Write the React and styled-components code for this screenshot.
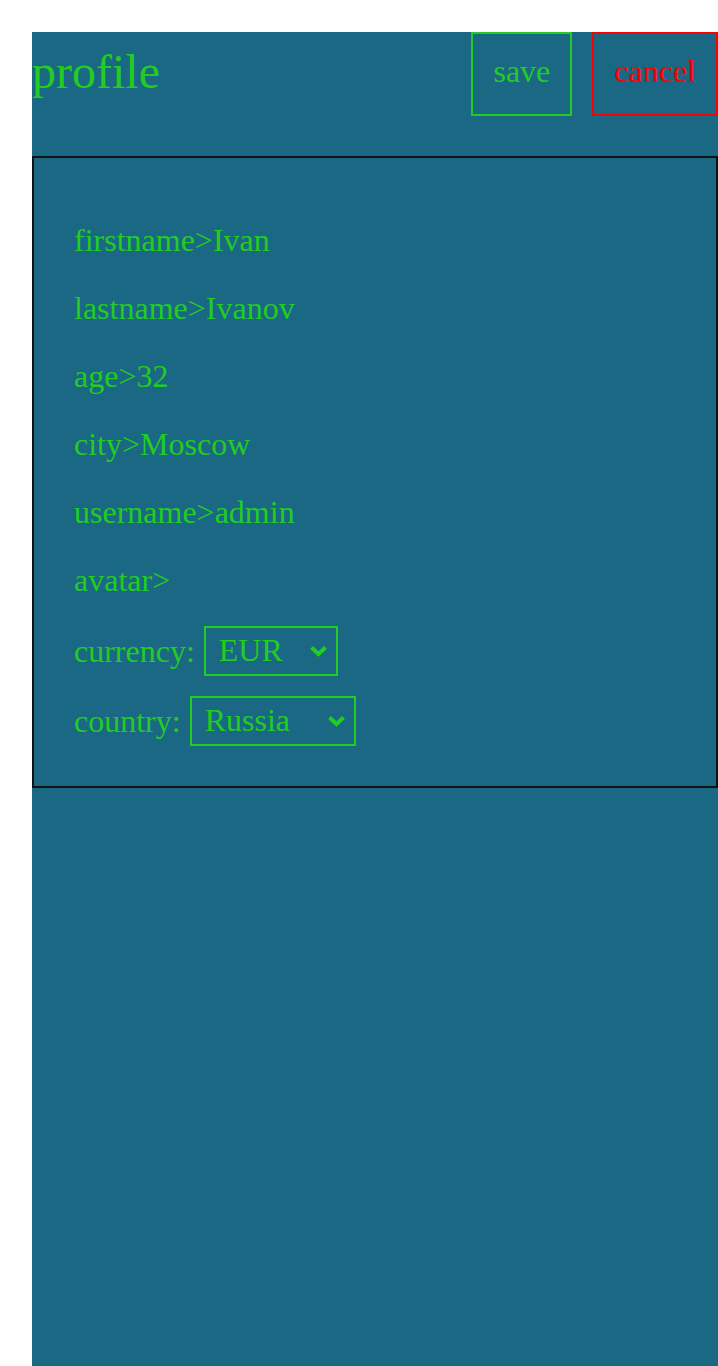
import React, { useState } from "react";
import styled, { createGlobalStyle } from "styled-components";

const GlobalStyle = createGlobalStyle`
  body {
    margin: 0;
    font-family: "Liberation Serif", "Times New Roman", serif;
  }
`;

const Colors = {
  Bg: "#1a6883",
  Primary: "#22cc22",
  Danger: "#ff0000",
  Border: "#121212",
};

const Page = styled.div`
  padding: 32px 0 0 32px;
`;

const Content = styled.main`
  min-height: calc(100vh - 32px);
  background: ${Colors.Bg};
  color: ${Colors.Primary};
`;

const Header = styled.header`
  display: flex;
  align-items: center;
  justify-content: space-between;
  margin-bottom: 40px;
`;

const Title = styled.h1`
  margin: 0 0 5px;
  font-size: 48px;
  font-weight: 400;
`;

const Actions = styled.div`
  display: flex;
  gap: 20px;
`;

const Button = styled.button`
  font-family: inherit;
  font-size: 32px;
  line-height: 40px;
  padding: 17px 20px 23px;
  background: transparent;
  border: 2px solid ${(p) => (p.$danger ? Colors.Danger : Colors.Primary)};
  color: ${(p) => (p.$danger ? Colors.Danger : Colors.Primary)};
  cursor: pointer;
`;

const Card = styled.div`
  display: flex;
  flex-direction: column;
  gap: 20px;
  padding: 40px;
  border: 2px solid ${Colors.Border};
  font-size: 32px;
`;

const Spacer = styled.div``;

const Row = styled.div`
  line-height: 44px;
  padding-bottom: 4px;
`;

const SelectRow = styled.label`
  display: flex;
  align-items: center;
  gap: 9px;
  height: 50px;
`;

const SelectWrap = styled.span`
  position: relative;
  display: inline-flex;
`;

const Select = styled.select`
  appearance: none;
  -webkit-appearance: none;
  font-family: inherit;
  font-size: 32px;
  height: 50px;
  padding: 0 51px 2px 13px;
  background: transparent;
  color: ${Colors.Primary};
  border: 2px solid ${Colors.Primary};
  border-radius: 0;
  outline: none;
  cursor: pointer;
`;

const Chevron = styled.svg`
  position: absolute;
  right: 10px;
  top: 50%;
  width: 19px;
  height: 12px;
  margin-top: -6px;
  pointer-events: none;
`;

function Dropdown({ value, onChange, options }) {
  return (
    <SelectWrap>
      <Select value={value} onChange={(e) => onChange(e.target.value)}>
        {options.map((o) => (
          <option key={o} value={o}>
            {o}
          </option>
        ))}
      </Select>
      <Chevron viewBox="0 0 19 12">
        <polyline
          points="2.5,2.5 9.5,9 16.5,2.5"
          fill="none"
          stroke={Colors.Primary}
          strokeWidth="4"
        />
      </Chevron>
    </SelectWrap>
  );
}

const user = {
  firstname: "Ivan",
  lastname: "Ivanov",
  age: 32,
  city: "Moscow",
  username: "admin",
  avatar: "",
};

export default function App() {
  const [currency, setCurrency] = useState("EUR");
  const [country, setCountry] = useState("Russia");

  return (
    <Page>
      <GlobalStyle />
      <Content>
        <Header>
          <Title>profile</Title>
          <Actions>
            <Button>save</Button>
            <Button $danger>cancel</Button>
          </Actions>
        </Header>
        <Card>
          <Spacer />
          {Object.entries(user).map(([key, value]) => (
            <Row key={key}>
              {key}&gt;{value}
            </Row>
          ))}
          <SelectRow>
            currency:
            <Dropdown
              value={currency}
              onChange={setCurrency}
              options={["RUB", "EUR", "USD"]}
            />
          </SelectRow>
          <SelectRow>
            country:
            <Dropdown
              value={country}
              onChange={setCountry}
              options={["Russia", "Belarus"]}
            />
          </SelectRow>
        </Card>
      </Content>
    </Page>
  );
}
